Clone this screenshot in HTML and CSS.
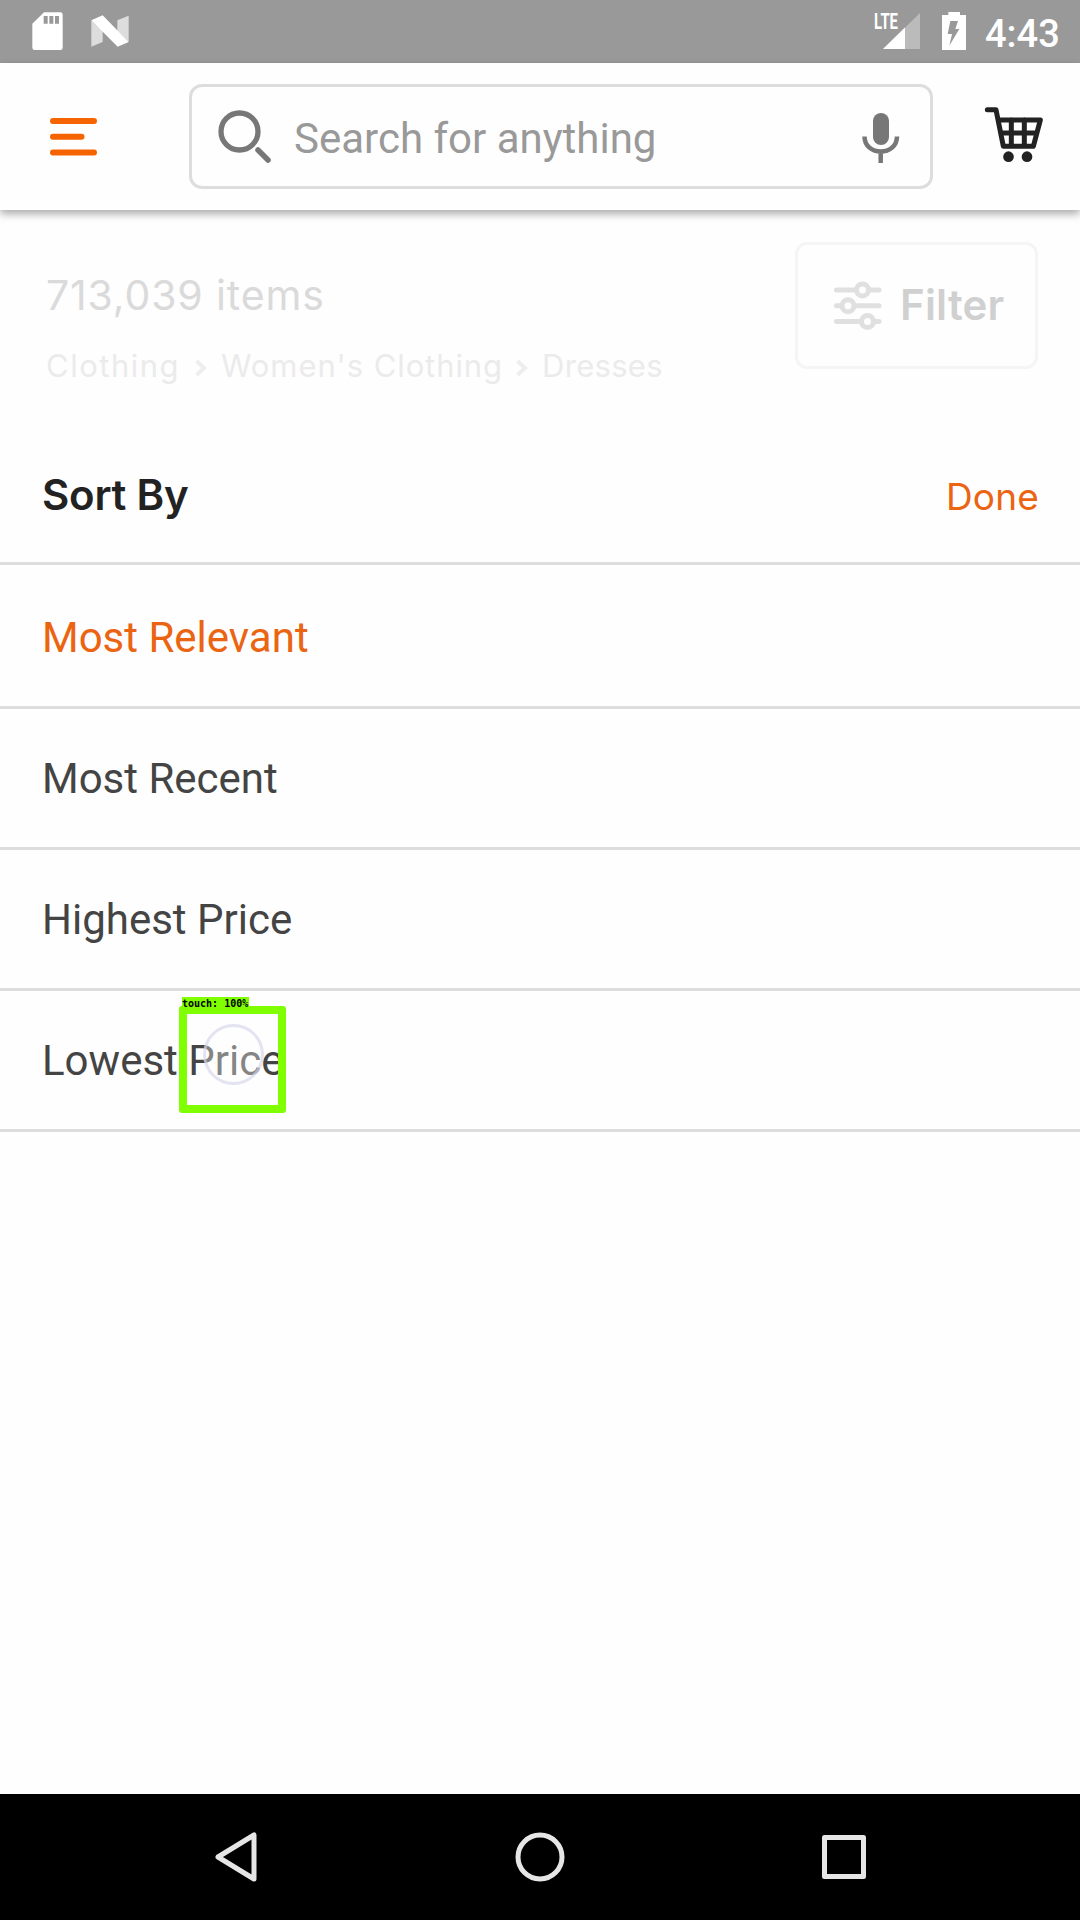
FILE: index.html
```html
<!DOCTYPE html>
<html lang="en">
<head>
<meta charset="utf-8">
<title>Sort By</title>
<link rel="stylesheet" href="styles.css">
</head>
<body>
<div class="screen">
  <div class="status">
    <svg class="sd" width="31" height="39" viewBox="96 37 93 117"><path fill="#fff" fill-rule="evenodd" d="M132 38H181Q188 38 188 45V144Q188 151 181 151H104Q97 151 97 144V72ZM131 49V72H143V49ZM148 49V72H160V49ZM165 49V72H177V49Z"/></svg>
    <svg class="nougat" width="38" height="32" viewBox="274 46 114 96"><path fill="#ddd" d="M275 62L309 94V127L275 141ZM353 62L387 48V127L353 94Z"/><path fill="#fff" d="M275 62L309 47L387 127L354 141Z"/></svg>
    <div class="status-right">
      <svg class="signal" width="50" height="44" viewBox="-2 -4 50 44"><path fill="#bbb" d="M46 1V37H9Z"/><path fill="#fff" d="M31 15.500V37H9Z"/><text class="lte" x="0" y="17" textLength="24" lengthAdjust="spacingAndGlyphs">LTE</text></svg>
      <svg class="battery" width="24" height="38" viewBox="489 36 72 114"><path fill="#fff" d="M508 36H543V45H561V150H489V45H508Z"/><path fill="#999" d="M514 63H537L529 87H541L511 137L519 102H506Z"/></svg>
      <span class="time">4:43</span>
    </div>
  </div>
  <header class="header">
    <svg class="menu" width="48" height="38" viewBox="0 0 48 38"><path stroke="#f56400" stroke-width="6" stroke-linecap="round" d="M3 3H44M3 18.700H31.500M3 34.500H44"/></svg>
    <div class="search">
      <svg class="lens" width="54" height="54" viewBox="0 0 54 54"><g fill="none" stroke="#777" stroke-width="5.300"><circle cx="21.500" cy="21.500" r="18.500"/><path stroke-linecap="round" stroke-width="5.500" d="M40 40L50 50"/></g></svg>
      <span class="placeholder">Search for anything</span>
      <svg class="mic" width="38" height="51" viewBox="0 0 38 51"><rect x="11" y="0" width="16" height="32" rx="8" fill="#777"/><path fill="none" stroke="#777" stroke-width="4.500" d="M2.500 23.500C2.500 43.500 35 43.500 35 23.500M18.700 39V50"/></svg>
    </div>
    <svg class="cart" width="60" height="57" viewBox="612 317 180 171"><g fill="none" stroke="#222" stroke-linejoin="round" stroke-linecap="round"><path stroke-width="15" d="M622 328H648L670 438H760L781 359H655M694 358V438M733 358V438M662 398H770"/></g><circle cx="685.500" cy="469" r="16" fill="#222"/><circle cx="741" cy="469" r="16" fill="#222"/></svg>
  </header>
  <section class="results">
    <div class="summary">
      <div class="count">713,039 items</div>
      <div class="crumbs">
        <span class="c1">Clothing</span>
        <svg width="12" height="18" viewBox="0 0 12 18"><path d="M1.500 2L9 9L1.500 16"/></svg>
        <span class="c2">Women's Clothing</span>
        <svg width="12" height="18" viewBox="0 0 12 18"><path d="M1.500 2L9 9L1.500 16"/></svg>
        <span class="c3">Dresses</span>
      </div>
    </div>
    <div class="filter">
      <svg width="48" height="50" viewBox="0 0 48 50"><g fill="#fefefe" stroke="#e0e0e0" stroke-width="5" stroke-linecap="round"><path d="M2.500 9H45M2.500 24.700H45M2.500 40.500H45"/><circle cx="28.500" cy="9" r="6"/><circle cx="14" cy="24.700" r="6"/><circle cx="33.500" cy="40.500" r="6"/></g></svg>
      <span>Filter</span>
    </div>
  </section>
  <div class="sort-head"><h1>Sort By</h1><span class="done">Done</span></div>
  <ul class="options">
    <li class="active">Most Relevant</li>
    <li>Most Recent</li>
    <li>Highest Price</li>
    <li>Lowest Price
      <i class="ripple"></i>
      <b class="touch-box"></b>
      <b class="touch-label">touch: 100%</b>
    </li>
  </ul>
  <nav class="nav">
    <svg width="44" height="52" viewBox="0 0 44 52"><path d="M40 4V48L4 26Z"/></svg>
    <svg width="52" height="52" viewBox="0 0 52 52"><circle cx="26" cy="26" r="22"/></svg>
    <svg width="46" height="46" viewBox="0 0 46 46"><rect x="3.500" y="3.500" width="39" height="39"/></svg>
  </nav>
</div>
</body>
</html>
```

FILE: styles.css
```css
* { box-sizing: border-box; }
body { margin: 0; background: #fefefe; font-family: Roboto, sans-serif; }
svg { display: block; flex: none; }
.screen { width: 1080px; height: 1920px; display: flex; flex-direction: column; overflow: hidden; }

.status { height: 63px; flex: none; background: #999; display: flex; align-items: flex-start; padding: 0 20px 0 32px; }
.sd { margin-top: 12px; }
.nougat { margin: 15px 0 0 28px; }
.status-right { margin-left: auto; display: flex; }
.signal { margin: 8px 20px 0 0; }
.lte { font: 700 22px/1 Roboto, sans-serif; fill: #fff; }
.battery { margin: 12px 19px 0 0; }
.time { color: #fff; font-size: 38px; font-weight: 500; line-height: 44px; margin-top: 12px; width: 75px; white-space: nowrap; }

.header { height: 147px; flex: none; background: #fefefe; display: flex; align-items: flex-start; position: relative; box-shadow: 0 4px 8px rgba(0,0,0,.33); }
.menu { margin: 55px 0 0 50px; }
.search { margin: 21px 0 0 91px; width: 744px; height: 105px; border: 3px solid #ddd; border-radius: 13px; display: flex; align-items: flex-start; }
.lens { margin: 23px 0 0 26px; }
.placeholder { color: #999; font-size: 42px; line-height: 50px; margin: 27px 0 0 22px; white-space: nowrap; }
.mic { margin: 26px 30px 0 auto; }
.cart { margin: 43px 0 0 51px; }

.results { height: 222px; flex: none; display: flex; justify-content: space-between; padding: 32px 42px 0 46px; font-family: Inter, sans-serif; }
.count { margin-top: 28px; font-size: 41px; line-height: 50px; letter-spacing: .85px; color: #dadada; font-weight: 400; white-space: nowrap; }
.crumbs { margin-top: 26px; display: flex; align-items: center; font-size: 31px; line-height: 40px; color: #ebebeb; white-space: nowrap; }
.crumbs svg { margin: 3px 14px 0 15px; fill: none; stroke: #eee; stroke-width: 4; }
.c1 { width: 134px; letter-spacing: 1.5px; }
.c2 { width: 280px; letter-spacing: .9px; }
.c3 { letter-spacing: .3px; }
.filter { width: 243px; height: 127px; border: 3px solid #f5f5f5; border-radius: 12px; display: flex; align-items: flex-start; font-weight: 600; font-size: 42px; letter-spacing: .2px; color: #d0d0d0; }
.filter svg { margin: 36px 0 0 36px; }
.filter span { margin: 35px 0 0 18px; line-height: 50px; }

.sort-head { height: 133px; flex: none; border-bottom: 3px solid #ddd; display: flex; justify-content: space-between; align-items: baseline; padding: 38px 41px 0 42px; font-family: Inter, sans-serif; }
h1 { margin: 0; font-size: 42px; line-height: 50px; font-weight: 600; letter-spacing: -.25px; color: #222; }
.done { font-size: 37px; letter-spacing: .2px; color: #eb6411; }

.options { margin: 0; padding: 0; list-style: none; flex: 1; font-size: 42px; line-height: 50px; color: #444; }
.options li { height: 141px; border-bottom: 3px solid #ddd; padding: 45px 42px 0; position: relative; white-space: nowrap; }
.options .active { height: 144px; padding-top: 48px; color: #eb6411; }
.ripple { position: absolute; left: 203px; top: 33px; width: 61px; height: 61px; border: 3px solid rgba(208,208,232,.6); border-radius: 50%; background: rgba(255,255,255,.35); }
.touch-box { position: absolute; left: 179px; top: 15px; width: 107px; height: 107px; border: 8px solid #80ff00; border-radius: 3px; }
.touch-label { position: absolute; left: 182px; top: 6px; width: 67px; height: 14px; background: #80ff00; color: #000; font: bold 10px/14px "DejaVu Sans Mono", monospace; }

.nav { height: 126px; flex: none; background: #000; display: flex; align-items: center; justify-content: space-between; padding: 0 213px 0 214px; }
.nav svg { fill: none; stroke: #e6e6e6; stroke-width: 5; stroke-linejoin: round; }
```
